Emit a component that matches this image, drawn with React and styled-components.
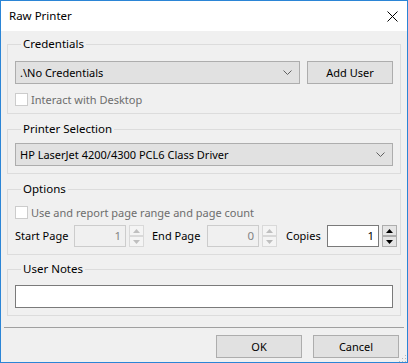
import styled, { createGlobalStyle } from 'styled-components';

const GlobalStyle = createGlobalStyle`
  html, body {
    margin: 0;
    padding: 0;
    background: #ffffff;
  }
  body {
    font-family: "Noto Sans", "Liberation Sans", sans-serif;
    font-size: 11px;
    color: #000;
  }
  * {
    box-sizing: border-box;
  }
`;

const Window = styled.div`
  width: 408px;
  height: 363px;
  border: 1px solid #2b85d6;
  background: #f0f0f0;
  display: flex;
  flex-direction: column;
`;

const TitleBar = styled.div`
  height: 30px;
  flex: none;
  background: #ffffff;
  display: flex;
  align-items: center;
  justify-content: space-between;
  padding: 0 9px 0 8px;
`;

const Title = styled.span`
  font-size: 11.5px;
  line-height: 16px;
  margin-top: -1px;
`;

const CloseButton = styled.svg`
  width: 11px;
  height: 11px;
  display: block;
`;

const Content = styled.div`
  padding: 0 6px;
  display: flex;
  flex-direction: column;
`;

const Group = styled.fieldset`
  margin: ${p => p.$top}px 0 0 0;
  padding: ${p => p.$pt}px 7px 7px 7px;
  border: 1px solid #dcdcdc;
  min-width: 0;
`;

const Legend = styled.legend`
  padding: 0 2px;
  margin-left: 6px;
  line-height: 16px;
  height: 16px;
  font-size: 11.5px;
`;

const Row = styled.div`
  display: flex;
  align-items: center;
  gap: ${p => p.$gap || 0}px;
  margin-top: ${p => p.$mt || 0}px;
`;

const Combo = styled.div`
  flex: 1;
  height: 23px;
  border: 1px solid #adadad;
  background: #e1e1e1;
  display: flex;
  align-items: center;
  justify-content: space-between;
  padding: 0 7px 0 4px;
  line-height: 16px;
`;

const Chevron = styled.svg`
  width: 9px;
  height: 5px;
  display: block;
`;

const Button = styled.div`
  width: ${p => p.$w || 86}px;
  height: 23px;
  border: 1px solid #adadad;
  background: #e1e1e1;
  display: flex;
  align-items: center;
  justify-content: center;
  line-height: 16px;
`;

const CheckRow = styled.div`
  display: flex;
  align-items: center;
  height: 13px;
  margin-top: ${p => p.$mt}px;
  color: #6d6d6d;
`;

const Box = styled.span`
  width: 13px;
  height: 13px;
  border: 1px solid #cccccc;
  background: #ffffff;
  margin-right: 3px;
  flex: none;
`;

const Label = styled.span`
  width: ${p => p.$w}px;
  flex: none;
  line-height: 16px;
`;

const NumField = styled.div`
  width: 52px;
  height: 22px;
  flex: none;
  border: 1px solid ${p => (p.$disabled ? '#cccccc' : '#7a7a7a')};
  background: ${p => (p.$disabled ? '#f0f0f0' : '#ffffff')};
  color: ${p => (p.$disabled ? '#838383' : '#000000')};
  display: flex;
  align-items: center;
  justify-content: flex-end;
  padding-right: 4px;
  line-height: 16px;
  font-size: 11.5px;
`;

const Spin = styled.div`
  width: 15px;
  height: 22px;
  flex: none;
  margin: 0 ${p => p.$mr}px 0 3px;
  display: flex;
  flex-direction: column;
  justify-content: space-between;
`;

const SpinHalf = styled.div`
  height: 11px;
  border: 1px solid ${p => (p.$disabled ? '#d9d9d9' : '#adadad')};
  background: ${p => (p.$disabled ? '#f4f4f4' : '#e5e5e5')};
  display: flex;
  align-items: center;
  justify-content: center;
`;

const Triangle = styled.svg`
  width: 7px;
  height: 4px;
  display: block;
`;

const TextBox = styled.div`
  height: 23px;
  border: 1px solid #7a7a7a;
  background: #ffffff;
`;

const Separator = styled.div`
  height: 1px;
  background: #a0a0a0;
  margin: 11px -3px 0 -3px;
`;

const Footer = styled.div`
  display: flex;
  justify-content: flex-end;
  gap: 11px;
  margin-top: 7px;
  padding-right: 2px;
  position: relative;
`;

const Grip = styled.svg`
  position: absolute;
  right: -6px;
  bottom: -5px;
  width: 10px;
  height: 10px;
`;

const ChevronIcon = () => (
  <Chevron viewBox="0 0 9 5">
    <polyline points="0.5,0.5 4.5,4.5 8.5,0.5" fill="none" stroke="#606060" strokeWidth="1" />
  </Chevron>
);

const Arrow = ({ down, disabled }) => (
  <Triangle viewBox="0 0 7 4">
    <polygon
      points={down ? '0,0 7,0 3.5,4' : '0,4 7,4 3.5,0'}
      fill={disabled ? '#bfbfbf' : '#000000'}
    />
  </Triangle>
);

const Spinner = ({ disabled, mr = 0 }) => (
  <Spin $mr={mr}>
    <SpinHalf $disabled={disabled}>
      <Arrow disabled={disabled} />
    </SpinHalf>
    <SpinHalf $disabled={disabled}>
      <Arrow down disabled={disabled} />
    </SpinHalf>
  </Spin>
);

export default function App() {
  return (
    <>
      <GlobalStyle />
      <Window>
        <TitleBar>
          <Title>Raw Printer</Title>
          <CloseButton viewBox="0 0 11 11">
            <path d="M0.5 0.5 L10.5 10.5 M10.5 0.5 L0.5 10.5" stroke="#000" strokeWidth="1" />
          </CloseButton>
        </TitleBar>
        <Content>
          <Group $top={5} $pt={9}>
            <Legend>Credentials</Legend>
            <Row $gap={7}>
              <Combo>
                <span>.\No Credentials</span>
                <ChevronIcon />
              </Combo>
              <Button $w={86}>Add User</Button>
            </Row>
            <CheckRow $mt={9}>
              <Box />
              Interact with Desktop
            </CheckRow>
          </Group>

          <Group $top={7} $pt={6}>
            <Legend>Printer Selection</Legend>
            <Row>
              <Combo>
                <span>HP LaserJet 4200/4300 PCL6 Class Driver</span>
                <ChevronIcon />
              </Combo>
            </Row>
          </Group>

          <Group $top={7} $pt={9}>
            <Legend>Options</Legend>
            <CheckRow $mt={0}>
              <Box />
              Use and report page range and page count
            </CheckRow>
            <Row $mt={6}>
              <Label $w={59}>Start Page</Label>
              <NumField $disabled>1</NumField>
              <Spinner disabled mr={8} />
              <Label $w={55}>End Page</Label>
              <NumField $disabled>0</NumField>
              <Spinner disabled mr={9} />
              <Label $w={41}>Copies</Label>
              <NumField>1</NumField>
              <Spinner />
            </Row>
          </Group>

          <Group $top={6} $pt={8}>
            <Legend>User Notes</Legend>
            <TextBox />
          </Group>

          <Separator />

          <Footer>
            <Button $w={86}>OK</Button>
            <Button $w={86}>Cancel</Button>
            <Grip viewBox="0 0 10 10">
              <rect x="8" y="2" width="1" height="1" fill="#b8b8b8" />
              <rect x="5" y="5" width="1" height="1" fill="#b8b8b8" />
              <rect x="8" y="5" width="1" height="1" fill="#b8b8b8" />
              <rect x="2" y="8" width="1" height="1" fill="#b8b8b8" />
              <rect x="5" y="8" width="1" height="1" fill="#b8b8b8" />
              <rect x="8" y="8" width="1" height="1" fill="#b8b8b8" />
            </Grip>
          </Footer>
        </Content>
      </Window>
    </>
  );
}
